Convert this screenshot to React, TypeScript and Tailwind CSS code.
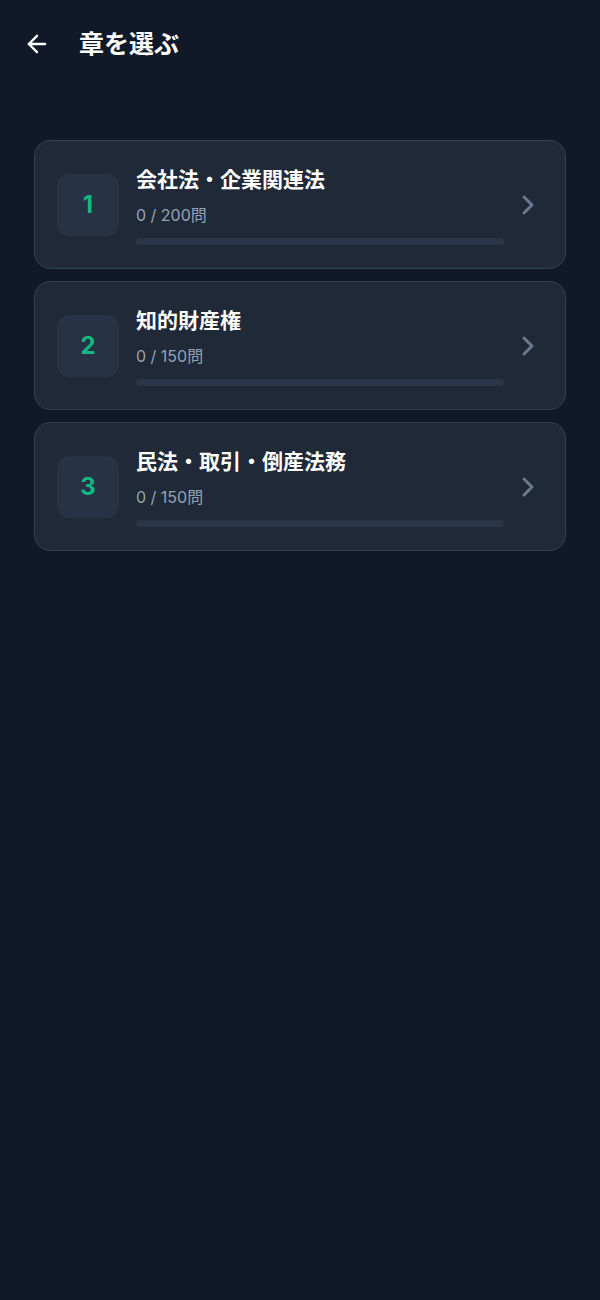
import { ArrowLeft, ChevronRight } from "lucide-react";

const chapters = [
  { id: 1, title: "会社法・企業関連法", done: 0, total: 200 },
  { id: 2, title: "知的財産権", done: 0, total: 150 },
  { id: 3, title: "民法・取引・倒産法務", done: 0, total: 150 },
];

const App = () => {
  return (
    <div
      className="min-h-[1300px] w-full bg-[#111827] text-white"
      style={{ fontFamily: '"Inter", "Noto Sans CJK JP", sans-serif' }}
    >
      {/* Header */}
      <div className="flex items-center gap-[28px] px-[23px] pt-[30px] pb-[30px]">
        <ArrowLeft className="h-[28px] w-[28px] text-white" strokeWidth={2} />
        <h1 className="text-[25px] font-bold leading-none">章を選ぶ</h1>
      </div>

      {/* Chapter list */}
      <div className="mt-[52px] flex flex-col gap-3 px-[34px]">
        {chapters.map((ch) => (
          <div
            key={ch.id}
            className="flex h-[129px] items-center rounded-2xl border border-[#334155] bg-[#1f2937] pl-[22px] pr-[21px]"
          >
            <div className="flex h-[62px] w-[62px] shrink-0 items-center justify-center rounded-xl bg-[#273244]">
              <span className="text-[24px] font-bold text-[#10b981]">{ch.id}</span>
            </div>
            <div className="ml-[17px] flex-1 pt-[4px]">
              <p className="text-[21px] font-bold leading-[24px] text-white">{ch.title}</p>
              <p className="mt-[13px] text-[16px] leading-[20px] text-[#94a3b8]">
                {ch.done} / {ch.total}問
              </p>
              <div className="mt-[13px] h-[7px] w-full rounded-full bg-[#2a3547]">
                <div
                  className="h-[7px] rounded-full bg-[#10b981]"
                  style={{ width: `${(ch.done / ch.total) * 100}%` }}
                />
              </div>
            </div>
            <ChevronRight className="ml-[8px] h-[32px] w-[32px] text-[#6b7a90]" strokeWidth={2.2} />
          </div>
        ))}
      </div>
    </div>
  );
};

export default App;
